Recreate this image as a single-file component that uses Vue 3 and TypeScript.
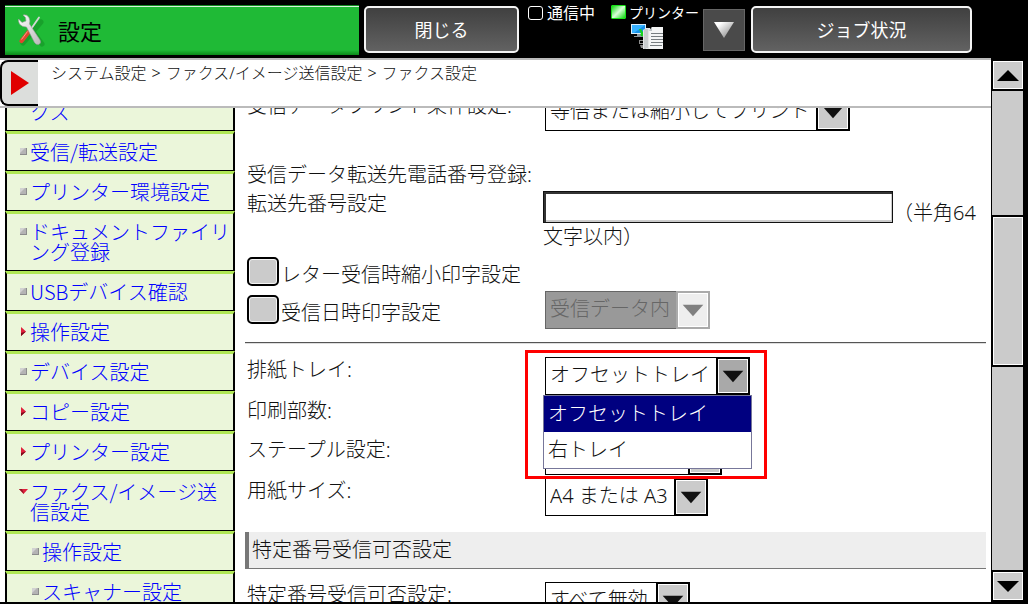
<script setup lang="ts">
import { ref } from 'vue'

type Marker = 'leaf' | 'closed' | 'open'

interface MenuEntry {
  label: string
  marker?: Marker
  nested?: boolean
}

const path = ['システム設定', 'ファクス/イメージ送信設定', 'ファクス設定']

const menu: MenuEntry[] = [
  { label: 'クス' },
  { label: '受信/転送設定', marker: 'leaf' },
  { label: 'プリンター環境設定', marker: 'leaf' },
  { label: 'ドキュメントファイリング登録', marker: 'leaf' },
  { label: 'USBデバイス確認', marker: 'leaf' },
  { label: '操作設定', marker: 'closed' },
  { label: 'デバイス設定', marker: 'leaf' },
  { label: 'コピー設定', marker: 'closed' },
  { label: 'プリンター設定', marker: 'closed' },
  { label: 'ファクス/イメージ送信設定', marker: 'open' },
  { label: '操作設定', marker: 'leaf', nested: true },
  { label: 'スキャナー設定', marker: 'leaf', nested: true },
]

const trays = ['オフセットトレイ', '右トレイ']
const tray = ref(trays[0])
const trayOpen = ref(true)
const forwardNumber = ref('')
const shrinkLetter = ref(false)
const printDate = ref(false)

function chooseTray(name: string): void {
  tray.value = name
  trayOpen.value = false
}
</script>

<template>
  <div class="screen">
    <header class="topbar">
      <div class="title">
        <svg class="tools" viewBox="0 0 28 34" aria-hidden="true">
          <defs>
            <linearGradient id="steel" x1="0" y1="0" x2="1" y2="1">
              <stop offset="0" stop-color="#ffffff" />
              <stop offset="1" stop-color="#b9b9b9" />
            </linearGradient>
          </defs>
          <path d="M6 30 L24 9 M17 20 L25 31" stroke="#128a22" stroke-width="5" stroke-linecap="round" opacity=".5" />
          <path d="M22 4.500 L13 17.500" stroke="#d5d5d5" stroke-width="1.800" stroke-linecap="round" />
          <path d="M10.500 17 L14 19.500 L6 29.500 Q4 31 2.500 29 Q2 28 3 26.500 Z" fill="#e2452f" />
          <path d="M10.500 18.500 L4.500 26.500" stroke="#ff9a84" stroke-width="1" />
          <path d="M6 2 Q10 1 12 4.500 Q13.500 8 12.500 11 L23 27 Q24.500 30.500 21.500 31.500 Q19 32 17.500 29.500 L9.500 14 Q5 14 2.500 11 Q1 8 1.500 6 L5 9.500 L9 8 L8.500 4.500 Z" fill="url(#steel)" stroke="#9b9b9b" stroke-width=".6" />
        </svg>
        <h1>設定</h1>
      </div>
      <button class="key close" type="button">閉じる</button>
      <div class="status">
        <div class="lamp"><i class="led"></i>通信中</div>
        <div class="printer">
          <div class="lamp small"><i class="led on"></i>プリンター</div>
          <svg class="device" viewBox="0 0 34 28" aria-hidden="true">
            <rect x="1" y="1" width="15" height="10" fill="#d9eefc" />
            <rect x="2" y="2" width="13" height="8" fill="#1590e6" />
            <path d="M2 2h13L4 10H2z" fill="#35b0ff" />
            <path d="M7 11h4v2h-4zM4 13h9v1H4z" fill="#8b9499" />
            <path d="M9 6l2 0 3 5 2-1-1 5-5-3 1-1z" fill="#15d51d" />
            <path d="M9 17h5v1h-4v2h4v1h-5zM10 22h4v3h-3z" fill="#8d8d8d" />
            <path d="M13 7l3-2h4v21h-7z" fill="#e4e6e7" />
            <path d="M15 6v20M17 6v19" stroke="#aeb3b5" stroke-width="1" />
            <path d="M19 8l3-4h11v22H19z" fill="#f4f5f5" />
            <path d="M19 8h3V4z" fill="#bfc5c8" />
            <path d="M21 10.500h12M21 13.500h12M21 16.500h12M21 19.500h12M20 22.500h12" stroke="#777d80" stroke-width="1" />
          </svg>
        </div>
      </div>
      <button class="more" type="button" aria-label="▼">
        <svg viewBox="0 0 20 16" aria-hidden="true">
          <defs>
            <linearGradient id="fade" x1="0" y1="0" x2="1" y2="1">
              <stop offset="0.200" stop-color="#ffffff" />
              <stop offset="1" stop-color="#777777" />
            </linearGradient>
          </defs>
          <path d="M0 0h20L10 16z" fill="url(#fade)" />
        </svg>
      </button>
      <button class="key jobs" type="button">ジョブ状況</button>
    </header>

    <div class="body">
      <div class="pane">
        <div class="pathbar">
          <button class="toggle" type="button" aria-label="▶">
            <svg viewBox="0 0 18 24" aria-hidden="true"><path d="M0 0L18 12L0 24z" fill="#e00000" /></svg>
          </button>
          <nav class="crumbs">
            <template v-for="(step, i) in path" :key="step">
              <span v-if="i > 0">&gt;</span>
              <span>{{ step }}</span>
            </template>
          </nav>
        </div>

        <div class="columns">
          <nav class="side">
            <a v-for="(entry, i) in menu" :key="i" href="#" class="entry" :class="{ nested: entry.nested }">
              <svg class="mark" viewBox="0 0 11 20" aria-hidden="true">
                <g v-if="entry.marker === 'leaf'">
                  <rect x="1" y="6" width="7" height="7" fill="#8c8c8c" />
                  <rect x="1" y="6" width="6" height="6" fill="#b4b4b4" />
                  <path d="M1 6h5L1 11z" fill="#d2d2d2" />
                </g>
                <g v-else-if="entry.marker === 'closed'">
                  <path d="M2 5L7 9.500L2 14z" fill="#e0203c" />
                  <path d="M7 9.500L2 14V11z" fill="#7c0c1c" />
                </g>
                <g v-else-if="entry.marker === 'open'">
                  <path d="M0 7h9L4.500 12z" fill="#e0203c" />
                  <path d="M0 7h3l2 5z" fill="#8e1424" />
                </g>
              </svg>
              <span>{{ entry.label }}</span>
            </a>
          </nav>

          <form class="form" @submit.prevent>
            <div class="row">
              <label for="condition">受信データプリント条件設定:</label>
              <span class="drop">
                <select id="condition"><option>等倍または縮小してプリント</option></select>
                <svg class="arrow" viewBox="0 0 33 38" aria-hidden="true"><path d="M5 13h23L16.500 26z" /></svg>
              </span>
            </div>

            <p class="caption">受信データ転送先電話番号登録:</p>
            <div class="row">
              <label for="forward">転送先番号設定</label>
              <div class="entryfield"><input id="forward" v-model="forwardNumber" type="text" />（半角64文字以内）</div>
            </div>

            <div class="row checks first">
              <div class="check">
                <input id="shrink" v-model="shrinkLetter" type="checkbox" />
                <label for="shrink">レター受信時縮小印字設定</label>
              </div>
            </div>
            <div class="row checks">
              <div class="check">
                <input id="date" v-model="printDate" type="checkbox" />
                <label id="dateLabel" for="date">受信日時印字設定</label>
              </div>
              <span class="drop off">
                <select aria-labelledby="dateLabel" disabled><option>受信データ内</option></select>
                <svg class="arrow" viewBox="0 0 33 38" aria-hidden="true"><path d="M5 13h23L16.500 26z" /></svg>
              </span>
            </div>

            <hr />

            <div class="group">
              <div class="row">
                <label for="tray">排紙トレイ:</label>
                <span class="drop pressed">
                  <select id="tray" v-model="tray">
                    <option v-for="name in trays" :key="name">{{ name }}</option>
                  </select>
                  <svg class="arrow" viewBox="0 0 33 38" aria-hidden="true"><path d="M5 13h23L16.500 26z" /></svg>
                  <ul v-if="trayOpen" class="popup" role="listbox">
                    <li
                      v-for="name in trays"
                      :key="name"
                      role="option"
                      :aria-selected="name === tray"
                      :class="{ chosen: name === tray }"
                      @click="chooseTray(name)"
                    >{{ name }}</li>
                  </ul>
                  <i class="callout"></i>
                </span>
              </div>
              <div class="row copies"><span class="name">印刷部数:</span></div>
              <div class="row">
                <label for="staple">ステープル設定:</label>
                <span class="drop">
                  <select id="staple" class="blank"><option></option></select>
                  <svg class="arrow" viewBox="0 0 33 38" aria-hidden="true"><path d="M5 13h23L16.500 26z" /></svg>
                </span>
              </div>
              <div class="row">
                <label for="paper">用紙サイズ:</label>
                <span class="drop">
                  <select id="paper"><option>A4 または A3</option></select>
                  <svg class="arrow" viewBox="0 0 33 38" aria-hidden="true"><path d="M5 13h23L16.500 26z" /></svg>
                </span>
              </div>
            </div>

            <h2>特定番号受信可否設定</h2>

            <div class="row">
              <label for="accept">特定番号受信可否設定:</label>
              <span class="drop">
                <select id="accept"><option>すべて無効</option></select>
                <svg class="arrow" viewBox="0 0 33 38" aria-hidden="true"><path d="M5 13h23L16.500 26z" /></svg>
              </span>
            </div>
          </form>
        </div>
      </div>

      <div class="scroll">
        <button type="button" aria-label="▲">
          <svg viewBox="0 0 22 11" aria-hidden="true"><path d="M0 11L11 0L22 11z" /></svg>
        </button>
        <div class="track"><i class="above"></i><i class="thumb"></i><i class="below"></i></div>
        <button type="button" aria-label="▼">
          <svg viewBox="0 0 22 11" aria-hidden="true"><path d="M0 0h22L11 11z" /></svg>
        </button>
      </div>
    </div>
  </div>
</template>

<style>
body {
  margin: 0;
  background: #000;
}
</style>

<style scoped>
.screen {
  box-sizing: border-box;
  display: flex;
  flex-direction: column;
  height: 100vh;
  padding-bottom: 2px;
  overflow: hidden;
  background: #000;
  color: #111;
  font: 300 20px/26px "Noto Sans CJK JP", sans-serif;
}
.screen * {
  box-sizing: border-box;
}
button,
input,
select {
  margin: 0;
  font: inherit;
  color: inherit;
  border-radius: 0;
  appearance: none;
}
button {
  display: flex;
  align-items: center;
  justify-content: center;
  padding: 0;
}

/* top bar */
.topbar {
  display: flex;
  align-items: flex-start;
  flex: none;
  height: 58px;
  padding: 5px 56px 0 5px;
}
.title {
  display: flex;
  align-items: center;
  flex: 1;
  height: 50px;
  padding: 0 0 2px 12px;
  border-top: 1px solid #128a22;
  background: linear-gradient(#d8f5dc 0 1px, #1fba36 1px 44px, #0a8a18);
  color: #000;
}
.tools {
  width: 28px;
  height: 34px;
  margin-right: 13px;
}
h1 {
  margin: 0;
  font-size: 22px;
  font-weight: 400;
}
.key {
  height: 47px;
  margin-top: 1px;
  padding-bottom: 2px;
  border: 2px solid #f4f4f4;
  border-radius: 5px;
  background: linear-gradient(#404040, #626262);
  color: #fff;
  font-size: 18px;
  font-weight: 400;
}
.close {
  width: 155px;
  margin-left: 5px;
}
.jobs {
  width: 221px;
  margin-left: 6px;
}
.status {
  display: flex;
  gap: 16px;
  width: 175px;
  margin-left: 9px;
  color: #fff;
  font-size: 16px;
  font-weight: 400;
}
.lamp {
  display: flex;
  align-items: center;
  gap: 4px;
  height: 15px;
  line-height: 15px;
  white-space: nowrap;
}
.lamp.small {
  gap: 3px;
  height: 14px;
  font-size: 14px;
}
.led {
  width: 15px;
  height: 14px;
  border: 1px solid #fff;
  border-radius: 3px;
}
.led.on {
  border-color: #18e018;
  border-radius: 1px;
  background: linear-gradient(135deg, #10d810, #d8ffd8 50%, #10d810);
}
.device {
  display: block;
  width: 34px;
  height: 28px;
  margin: 4px 0 0 19px;
}
.more {
  width: 42px;
  height: 42px;
  margin-top: 4px;
  border: 1px solid #666;
  background: #4a4a4a;
}
.more svg {
  width: 20px;
  height: 16px;
}

/* page area */
.body {
  display: flex;
  flex: 1;
  min-height: 0;
}
.pane {
  display: flex;
  flex-direction: column;
  flex: 1;
  min-width: 0;
  border-top: 2px solid #bbb;
  background: #fff;
}
.pathbar {
  display: flex;
  flex: none;
  height: 48px;
  border-bottom: 2px solid #bbb;
}
.toggle {
  width: 38px;
  border: 2px solid #000;
  border-right: 0;
  border-radius: 8px 0 0 8px;
  background: #dcdedc;
}
.toggle svg {
  width: 18px;
  height: 24px;
}
.crumbs {
  display: flex;
  gap: 5px;
  padding-left: 13px;
  font-family: "Noto Sans", "Noto Sans CJK JP", sans-serif;
  font-size: 16px;
}
.columns {
  display: flex;
  flex: 1;
  min-height: 0;
  overflow: hidden;
}

/* menu, scrolled part-way */
.side {
  flex: none;
  width: 230px;
  margin: -17px 10px 0 5px;
}
.entry {
  display: flex;
  padding: 8px 0 8px 12px;
  border: solid #000;
  border-width: 0 2px 1px;
  border-top: 3px solid #b0e854;
  background: #ebf6da;
  color: #00f;
  line-height: 20px;
  text-decoration: none;
}
.nested {
  padding-left: 24px;
}
.mark {
  flex: none;
  width: 11px;
  height: 20px;
}

/* settings form, scrolled part-way */
.form {
  flex: 1;
  min-width: 0;
  margin: -15px 5px 0 0;
  font-family: "Noto Sans", "Noto Sans CJK JP", sans-serif;
}
.row {
  display: flex;
  align-items: flex-start;
  padding-left: 2px;
}
.row > label,
.row > .name,
.row > .check {
  flex: none;
  width: 298px;
}
.caption {
  margin: 31px 0 3px;
  padding-left: 2px;
}
.entryfield {
  flex: 1;
  margin-left: -2px;
  line-height: 24px;
}
.entryfield input {
  width: 350px;
  height: 32px;
  margin-bottom: 2px;
  padding: 0 6px;
  border: 1px solid #111;
  background: #fff;
  box-shadow: inset 2px 2px #333, inset -1px -2px #ccc;
  vertical-align: bottom;
}
.checks {
  min-height: 38px;
}
.checks.first {
  margin-top: 4px;
}
.check {
  display: flex;
  gap: 2px;
}
.check input {
  flex: none;
  width: 32px;
  height: 29px;
  margin-top: 4px;
  border: 2px solid #000;
  border-radius: 5px;
  background: #cbcbcb;
  box-shadow: inset 0 0 0 1px #f4f4f4;
}
.check label {
  padding-top: 9px;
}
.drop {
  position: relative;
  display: flex;
  height: 38px;
}
.drop select {
  height: 38px;
  padding: 0 39px 2px 4px;
  border: 1px solid #000;
  background: #fff;
  opacity: 1;
}
.drop select.blank {
  width: 177px;
}
.arrow {
  position: absolute;
  top: 0;
  right: 0;
  width: 34px;
  height: 38px;
  border: 2px solid #000;
  outline: 1px solid #fff;
  outline-offset: -3px;
  background: #cbcbcb;
  fill: #111;
  pointer-events: none;
}
.pressed .arrow {
  background: #a9a9a9;
}
.off select {
  border-color: #666;
  background: #999;
  color: #666;
}
.off .arrow {
  border-color: #aaa;
  background: #eee;
  fill: #808080;
}
hr {
  height: 2px;
  margin: 13px 0;
  border: 0;
  border-top: 1px solid #555;
  background: #ddd;
}
.group {
  display: flex;
  flex-direction: column;
  gap: 3px;
}
.copies {
  min-height: 36px;
}
.popup {
  position: absolute;
  z-index: 2;
  top: 38px;
  left: -2px;
  width: 209px;
  margin: 0;
  padding: 0;
  border: 1px solid #77779a;
  background: #fff;
  list-style: none;
}
.popup li {
  height: 36px;
  padding-left: 4px;
  line-height: 36px;
}
.popup .chosen {
  background: #000080;
  color: #fff;
}
.callout {
  position: absolute;
  z-index: 3;
  top: -7px;
  left: -20px;
  width: 242px;
  height: 129px;
  border: 3px solid #f00;
  pointer-events: none;
}
h2 {
  height: 37px;
  margin: 16px 0 13px;
  padding-left: 3px;
  border-left: 4px solid #777;
  border-bottom: 1px solid #777;
  background: #eee;
  font-size: 20px;
  font-weight: 300;
  line-height: 36px;
}

/* scroll bar */
.scroll {
  display: flex;
  flex-direction: column;
  flex: none;
  width: 37px;
  padding: 1px 4px 0 0;
  background: #000;
}
.scroll button {
  flex: none;
  height: 32px;
  border: 2px solid #000;
  border-right-width: 1px;
  background: #cbcbcb;
  box-shadow: inset 0 0 0 1px #fff;
}
.scroll svg {
  width: 22px;
  height: 11px;
}
.track {
  display: flex;
  flex-direction: column;
  flex: 1;
  border: solid #000;
  border-width: 0 1px;
  background: #cbcbcb;
}
.above {
  flex: 25 0 0;
}
.thumb {
  flex: 30 0 0;
  border: solid #000;
  border-width: 2px 0 2px 1px;
  box-shadow: inset 0 0 0 1px #fff;
}
.below {
  flex: 41 0 0;
}
</style>
